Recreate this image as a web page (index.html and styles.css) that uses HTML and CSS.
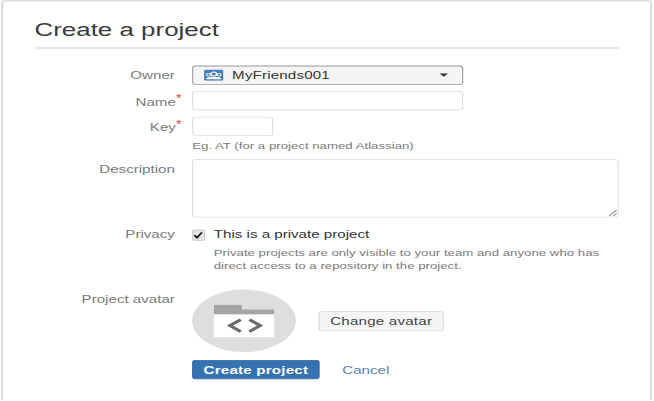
FILE: index.html

```html
<!DOCTYPE html>
<html lang="en">
<head>
  <meta charset="UTF-8">
  <title>Create a project</title>
  <link rel="stylesheet" href="styles.css">
</head>
<body>
  <div class="page">
    <div class="panel">
      <h1>Create a project</h1>

      <form class="form">
        <div class="row row-owner">
          <label class="lbl">Owner</label>
          <div class="select">
            <svg class="team-icon" width="18" height="14" viewBox="0 0 18 14">
              <rect width="18" height="14" rx="2" fill="#4a80b8"/>
              <circle cx="9" cy="5.500" r="2.600" fill="none" stroke="#fff" stroke-width="1.300"/>
              <circle cx="4" cy="6.500" r="1.700" fill="none" stroke="#fff" stroke-width="1"/>
              <circle cx="14" cy="6.500" r="1.700" fill="none" stroke="#fff" stroke-width="1"/>
              <path d="M2 12c.5-2 1.500-2.800 3-2.800h8c1.500 0 2.500.8 3 2.800z" fill="#fff"/>
            </svg>
            <span class="select-text">MyFriends001</span>
            <span class="caret"></span>
          </div>
        </div>

        <div class="row row-name">
          <label class="lbl">Name<span class="req">*</span></label>
          <input class="txt txt-wide" type="text">
        </div>

        <div class="row row-key">
          <label class="lbl">Key<span class="req">*</span></label>
          <input class="txt txt-short" type="text">
        </div>
        <div class="row row-hint">
          <span class="lbl"></span>
          <div class="help">Eg. AT (for a project named Atlassian)</div>
        </div>

        <div class="row row-desc">
          <label class="lbl">Description</label>
          <textarea class="area"></textarea>
        </div>

        <div class="row row-privacy">
          <label class="lbl">Privacy</label>
          <div class="privacy">
            <div class="check-line">
              <span class="check">
                <svg width="11" height="14" viewBox="0 0 11 14"><path d="M2 7l2.500 3L9 3.500" fill="none" stroke="#222" stroke-width="2"/></svg>
              </span>
              <span class="check-text">This is a private project</span>
            </div>
            <div class="help help-privacy">Private projects are only visible to your team and anyone who has<br>direct access to a repository in the project.</div>
          </div>
        </div>

        <div class="row row-avatar">
          <label class="lbl">Project avatar</label>
          <div class="avatar">
            <svg width="56" height="41" viewBox="0 0 56 41">
              <path d="M0 1a1 1 0 0 1 1-1h25v6h30v6H0z" fill="#a5a5a5"/>
              <path d="M0 12h56v28a1 1 0 0 1-1 1H1a1 1 0 0 1-1-1z" fill="#fff"/>
              <path d="M25 18.500L15 26l10 7.500M33 18.500L43 26l-10 7.500" fill="none" stroke="#6b6b6b" stroke-width="3.500"/>
            </svg>
          </div>
          <button class="btn" type="button">Change avatar</button>
        </div>

        <div class="row row-actions">
          <span class="lbl"></span>
          <button class="btn-primary" type="button">Create project</button>
          <a class="cancel" href="#">Cancel</a>
        </div>
      </form>
    </div>
  </div>
</body>
</html>
```

FILE: styles.css

```css
html, body { margin: 0; padding: 0; background: #fff; }
body { font-family: "Liberation Sans", Arial, sans-serif; font-size: 14px; color: #333; }

.page { height: 401px; overflow: hidden; }

/* the screenshot is stretched wide and squashed, so the whole panel is too */
.panel {
  box-sizing: border-box;
  width: 603px;
  height: 500px;
  margin-left: 1px;
  padding: 0 29px 0 30px;
  border: 2px solid #dcdcdc;
  border-bottom: 0;
  border-radius: 4px 4px 0 0;
  transform: scale(1.08, 0.8);
  transform-origin: 0 0;
}

h1 {
  box-sizing: border-box;
  height: 59px;
  margin: 0 0 21px -1px;
  padding-top: 20px;
  font-size: 24px;
  font-weight: normal;
  line-height: 30px;
  color: #3a3a3a;
  border-bottom: 2px solid #e2e2e2;
}

.row { display: flex; }
.lbl {
  flex: none;
  width: 129px;
  margin-right: 16px;
  text-align: right;
  color: #7a7a7a;
}

.row-owner { height: 24px; margin-bottom: 8px; line-height: 24px; }
.row-name { height: 24px; margin-bottom: 8px; line-height: 20px; }
.row-key { height: 24px; line-height: 20px; }
.row-hint { height: 29px; line-height: 24px; }
.row-desc { height: 73px; margin-bottom: 10px; line-height: 24px; }
.row-privacy { height: 80px; line-height: 23px; }
.row-avatar { height: 78px; margin-bottom: 10px; line-height: 24px; }
.row-actions { height: 24px; align-items: center; }

.select {
  box-sizing: border-box;
  display: flex;
  align-items: center;
  width: 251px;
  height: 24px;
  padding: 0 13px 0 10px;
  background: #f5f5f5;
  border: 1px solid #999;
  border-radius: 3px;
}
.team-icon { flex: none; margin-right: 8px; }
.select-text { flex: 1; color: #333; letter-spacing: 0.15px; }
.caret {
  width: 0;
  height: 0;
  border-left: 4px solid transparent;
  border-right: 4px solid transparent;
  border-top: 4px solid #333;
}

.req { margin-right: -6px; color: #d04437; font-size: 13px; vertical-align: 4px; }

.txt, .area {
  box-sizing: border-box;
  margin: 0;
  padding: 2px 4px;
  background: #fff;
  border: 1px solid #ddd;
  border-radius: 3px;
  outline: 0;
}
.txt-wide { width: 251px; height: 24px; }
.txt-short { width: 75px; height: 24px; }
.area { display: block; width: 395px; height: 73px; resize: both; }

.help { font-size: 12.250px; color: #7a7a7a; }
.help-privacy { margin: 3px 0 0 20px; line-height: 16px; }

.privacy { width: 420px; }
.check-line { display: flex; align-items: center; height: 23px; }
.check {
  box-sizing: border-box;
  display: flex;
  width: 12px;
  height: 14px;
  margin-right: 8px;
  background: #e6e6e6;
  border: 1px solid #ccc;
  border-radius: 2px;
}
.check svg { flex: none; margin: -1px; }
.check-text { color: #333; }

.avatar {
  flex: none;
  display: flex;
  align-items: center;
  justify-content: center;
  width: 96px;
  height: 78px;
  margin-right: 21px;
  border-radius: 50%;
  background: #dedede;
}
.btn {
  box-sizing: border-box;
  align-self: center;
  width: 116px;
  height: 25px;
  padding: 0;
  background: #f5f5f5;
  border: 1px solid #d5d5d5;
  border-radius: 3px;
  font: 14px "Liberation Sans", Arial, sans-serif;
  letter-spacing: 0.2px;
  color: #444;
}
.btn-primary {
  box-sizing: border-box;
  width: 118px;
  height: 24px;
  padding: 0;
  background: #3572b0;
  border: 1px solid #2d659d;
  border-radius: 3px;
  font: bold 14px "Liberation Sans", Arial, sans-serif;
  letter-spacing: 0.2px;
  color: #fff;
}
.cancel { margin-left: 21px; color: #5b82ad; text-decoration: none; }
```
